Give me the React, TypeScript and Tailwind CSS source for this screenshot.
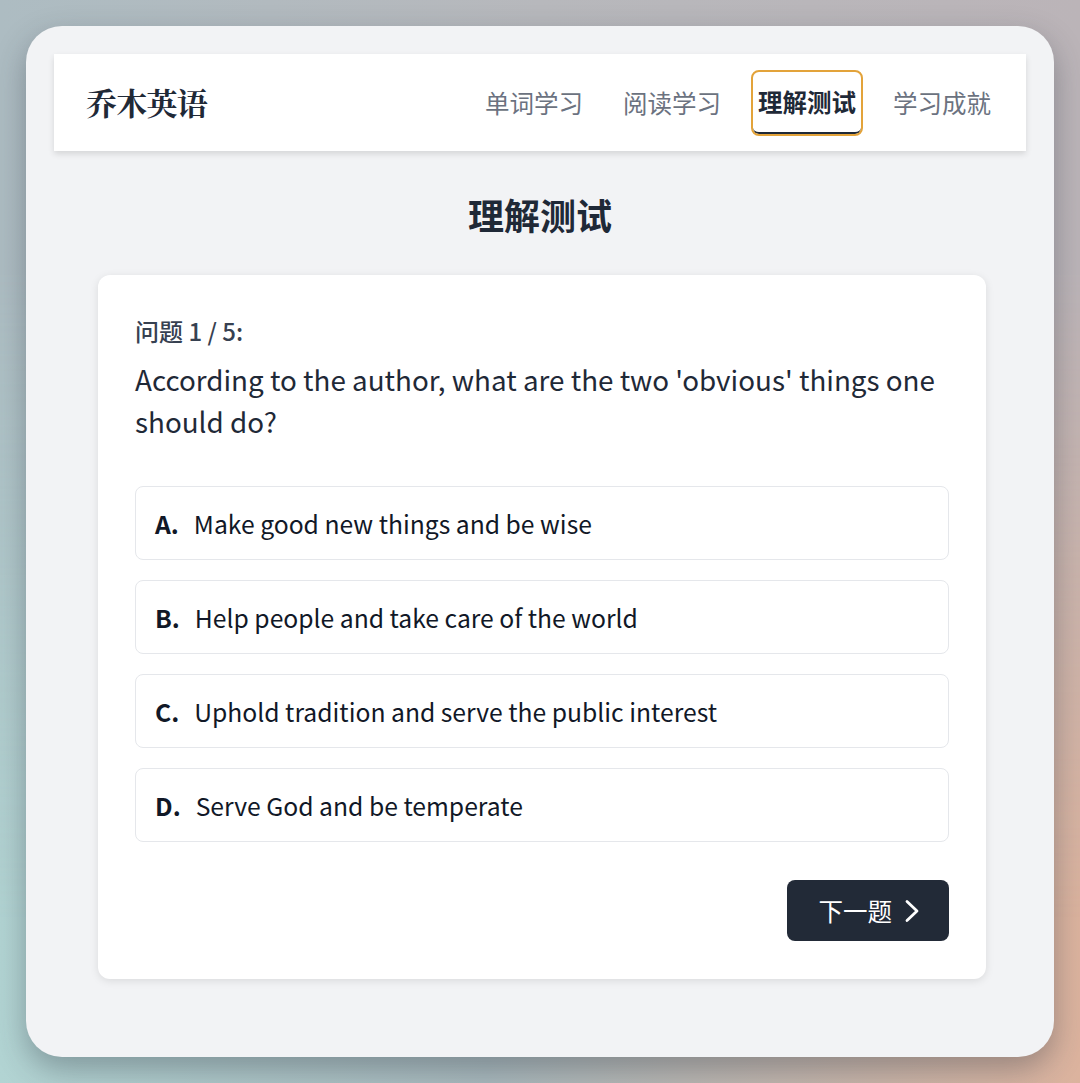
import React from "react";

const options = [
  { key: "A.", text: "Make good new things and be wise" },
  { key: "B.", text: "Help people and take care of the world" },
  { key: "C.", text: "Uphold tradition and serve the public interest" },
  { key: "D.", text: "Serve God and be temperate" },
];

const navItems = ["单词学习", "阅读学习", "理解测试", "学习成就"];

export default function App() {
  return (
    <div className="relative h-[1083px] w-full overflow-hidden bg-[linear-gradient(to_right,#b2d4d3_0%,#a9b9bd_45%,#dcb39e_100%)] p-[26px] font-['Noto_Sans_CJK_SC','Noto_Sans',sans-serif]">
      <div className="pointer-events-none absolute inset-0 bg-[linear-gradient(to_right,#adbcc2_0%,#b7b8bc_50%,#bbb4b8_100%)] [mask-image:linear-gradient(to_bottom,black_0%,black_25%,transparent_85%)]" />
      <div className="relative flex h-full flex-col rounded-[36px] bg-[#f2f3f5] p-7 shadow-[0_12px_30px_rgba(40,50,60,0.35)]">
        <header className="flex h-[97px] items-center justify-between bg-white pl-8 pr-[27px] shadow-[0_3px_6px_rgba(0,0,0,0.12)]">
          <div className="font-['Noto_Serif_CJK_SC','Noto_Serif_CJK_JP',serif] text-[31px] font-bold tracking-tight text-[#1f2937]">
            乔木英语
          </div>
          <nav className="flex items-center gap-6">
            {navItems.map((item) =>
              item === "理解测试" ? (
                <span
                  key={item}
                  className="rounded-md border-b-2 border-[#1f2937] px-[5px] py-[14px] text-[24.5px] font-bold leading-8 text-[#1f2937] outline-2 outline-[#e3a33a]"
                >
                  {item}
                </span>
              ) : (
                <span key={item} className="px-2 text-[24.5px] leading-8 text-[#6b7280]">
                  {item}
                </span>
              )
            )}
          </nav>
        </header>

        <main className="flex flex-col">
          <h1 className="mt-[43px] text-center text-4xl font-bold leading-10 text-[#1f2937]">理解测试</h1>

          <section className="ml-11 mr-10 mt-[41px] rounded-xl bg-white px-[37px] pb-[38px] pt-[41px] shadow-[0_2px_8px_rgba(0,0,0,0.10)]">
            <div className="text-[24px] font-medium leading-[30px] text-[#374151]">问题 1 / 5:</div>
            <p className="mt-3 text-[27.8px] leading-[42px] text-[#1f2937]">
              According to the author, what are the two 'obvious' things one should do?
            </p>

            <div className="mt-11 flex flex-col gap-5">
              {options.map((o) => (
                <div
                  key={o.key}
                  className="flex items-center rounded-lg border border-[#e5e7eb] bg-white px-[19px] py-5 text-[24.7px] leading-8 text-[#111827]"
                >
                  <span className="mr-[15px] font-semibold">{o.key}</span>
                  <span>{o.text}</span>
                </div>
              ))}
            </div>

            <div className="mt-[38px] flex justify-end">
              <button className="flex h-[61px] items-center gap-3 rounded-lg bg-[#222a37] pl-8 pr-[29px] text-[24.5px] leading-8 text-white">
                <span>下一题</span>
                <svg width="16" height="26" viewBox="0 0 16 26" fill="none">
                  <path d="M3 3.5 L13 13 L3 22.5" stroke="white" strokeWidth="2.8" strokeLinecap="round" strokeLinejoin="round" />
                </svg>
              </button>
            </div>
          </section>
        </main>
      </div>
    </div>
  );
}
